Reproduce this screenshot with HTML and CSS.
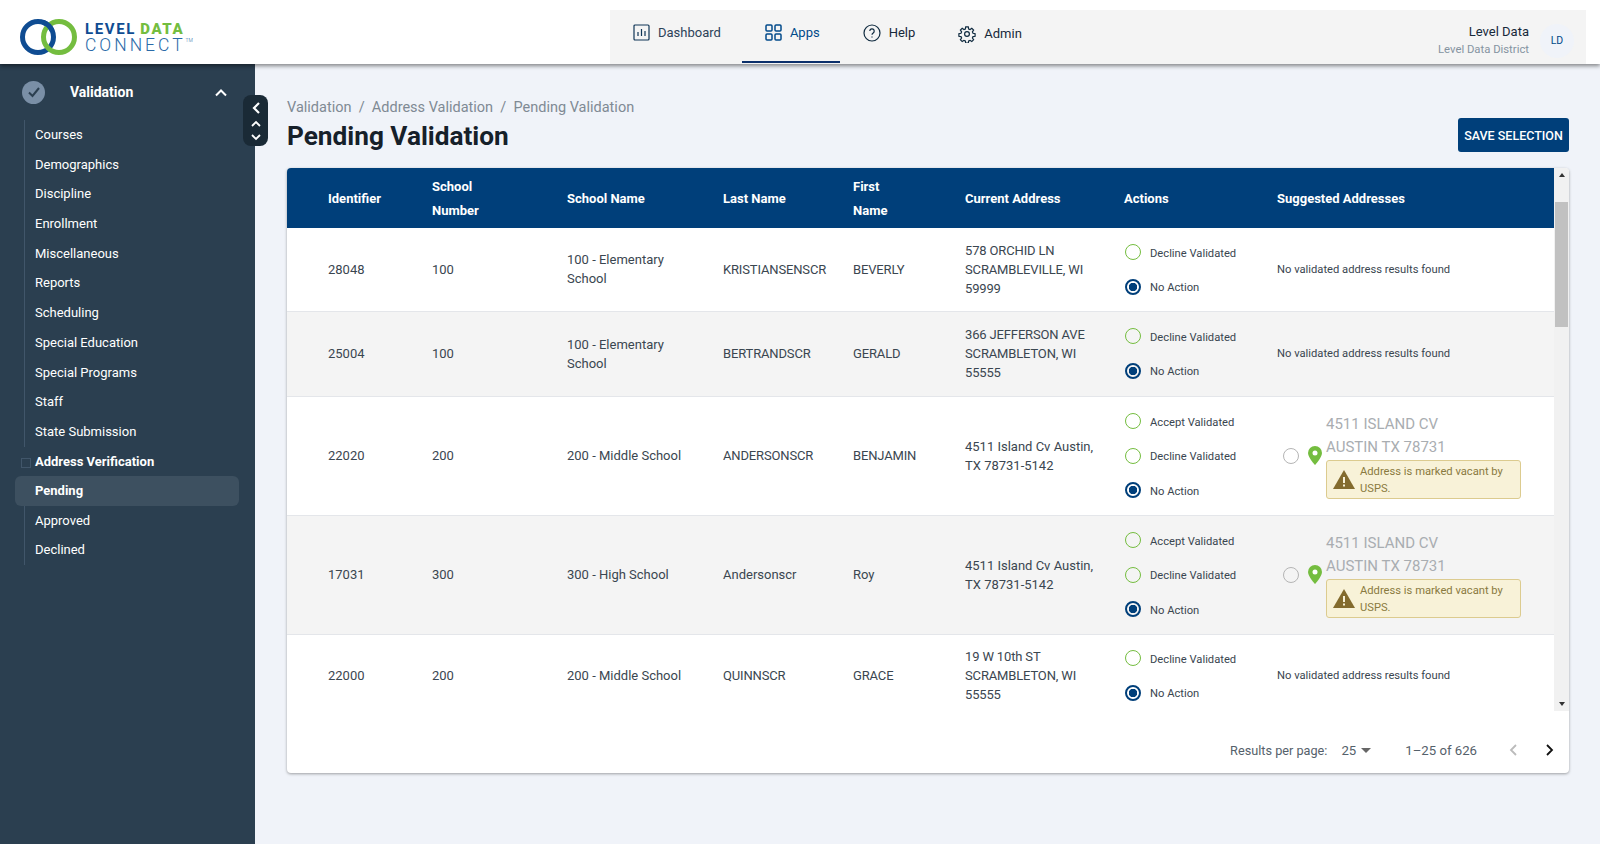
FILE: index.html
```html
<!DOCTYPE html>
<html lang="en">
  <head>
    <meta charset="UTF-8" />
    <meta name="viewport" content="width=device-width, initial-scale=1.0" />
    <title>Pending Validation</title>
    <link rel="stylesheet" href="styles.css">
  </head>
  <body>
    <header class="topbar">
      <a class="logo" href="#">
        <svg class="logo-rings" width="57" height="36" viewBox="0 0 57 36" fill="none" stroke-width="5">
          <circle cx="18" cy="18" r="15.5" stroke="#0f4c92"/>
          <circle cx="39" cy="18" r="15.5" stroke="#74bd3f"/>
          <path d="M23.3 3.44A15.5 15.5 0 0 1 32.05 11.45" stroke="#0f4c92"/>
        </svg>
        <span class="logo-text">
          <span class="logo-top">LEVEL <b>DATA</b></span>
          <span class="logo-bottom">CONNECT<sup>TM</sup></span>
        </span>
      </a>
      <div class="topnav">
        <nav class="topnav-links">
          <a href="#" class="topnav-item">
            <svg width="17" height="17" viewBox="0 0 17 17" fill="none" stroke="#0f3556" stroke-width="1.2"><rect x="1" y="1" width="15" height="15" rx="1"/><path d="M5 12V8M8.5 12V5M12 12V7"/></svg>
            Dashboard
          </a>
          <a href="#" class="topnav-item active">
            <svg width="17" height="17" viewBox="0 0 17 17" fill="none" stroke="#004a8a" stroke-width="1.5"><rect x="1" y="1" width="6" height="6" rx="1"/><rect x="10" y="1" width="6" height="6" rx="1"/><rect x="1" y="10" width="6" height="6" rx="1"/><rect x="10" y="10" width="6" height="6" rx="1"/></svg>
            Apps
          </a>
          <a href="#" class="topnav-item dark help">
            <svg width="18" height="18" viewBox="0 0 18 18" fill="none" stroke="#0f2a3f" stroke-width="1.2"><circle cx="9" cy="9" r="8"/><path d="M6.8 7a2.2 2.2 0 1 1 3.4 1.9C9.4 9.4 9 9.9 9 10.8"/><path d="M9 12.6v1"/></svg>
            Help
          </a>
          <a href="#" class="topnav-item dark admin">
            <svg width="18" height="18" viewBox="0 0 24 24" fill="none" stroke="#0f2a3f" stroke-width="1.6"><circle cx="12" cy="12" r="3.2"/><path d="M10.3 2.500h3.400l.5 2.800 1.900.8 2.300-1.600 2.400 2.400-1.600 2.300.8 1.900 2.800.5v3.400l-2.800.5-.8 1.900 1.600 2.300-2.400 2.400-2.300-1.600-1.900.8-.5 2.800h-3.400l-.5-2.800-1.900-.8-2.300 1.600-2.400-2.400 1.600-2.300-.8-1.900-2.800-.5v-3.400l2.800-.5.8-1.900-1.600-2.300 2.400-2.400 2.300 1.600 1.900-.8z"/></svg>
            Admin
          </a>
        </nav>
        <div class="account">
          <div class="account-text">
            <div class="account-name">Level Data</div>
            <div class="account-district">Level Data District</div>
          </div>
          <div class="avatar">LD</div>
        </div>
      </div>
    </header>

    <div class="layout">
      <aside class="sidebar">
        <div class="side-head">
          <span class="side-check">
            <svg width="14" height="12" viewBox="0 0 14 12" fill="none" stroke="#2b3f50" stroke-width="2"><path d="M2 6.500l3.500 3.500L12 2"/></svg>
          </span>
          <span class="side-title">Validation</span>
          <svg class="side-chevron" width="14" height="9" viewBox="0 0 14 9" fill="none" stroke="#fff" stroke-width="2"><path d="M2 7.500l5-5 5 5"/></svg>
        </div>
        <div class="side-handle">
          <svg width="10" height="14" viewBox="0 0 10 14" fill="none" stroke="#fff" stroke-width="2.2"><path d="M8 2L3 7l5 5"/></svg>
          <svg class="handle-updown" width="12" height="21" viewBox="0 0 12 21" fill="none" stroke="#fff" stroke-width="1.8"><path d="M2 6l4-4 4 4M2 15l4 4 4-4"/></svg>
        </div>
        <ul class="side-list">
          <li>Courses</li>
          <li>Demographics</li>
          <li>Discipline</li>
          <li>Enrollment</li>
          <li>Miscellaneous</li>
          <li>Reports</li>
          <li>Scheduling</li>
          <li>Special Education</li>
          <li>Special Programs</li>
          <li>Staff</li>
          <li>State Submission</li>
        </ul>
        <div class="side-group">Address Verification</div>
        <ul class="side-list sub">
          <li class="current">Pending</li>
          <li>Approved</li>
          <li>Declined</li>
        </ul>
      </aside>

      <main class="content">
        <div class="page-head">
          <div>
            <div class="crumbs">Validation &nbsp;/&nbsp; Address Validation &nbsp;/&nbsp; Pending Validation</div>
            <h1>Pending Validation</h1>
          </div>
          <button class="save-btn">SAVE SELECTION</button>
        </div>

        <section class="card">
          <div class="table-area">
            <div class="table-clip">
              <table class="grid">
                <colgroup>
                  <col class="c-id"><col class="c-num"><col class="c-school"><col class="c-last"><col class="c-first"><col class="c-addr"><col class="c-act"><col>
                </colgroup>
                <thead>
                  <tr>
                    <th class="first">Identifier</th>
                    <th>School<br>Number</th>
                    <th>School Name</th>
                    <th>Last Name</th>
                    <th>First<br>Name</th>
                    <th>Current Address</th>
                    <th>Actions</th>
                    <th>Suggested Addresses</th>
                  </tr>
                </thead>
                <tbody>
                  <tr class="r2">
                    <td class="first">28048</td><td>100</td><td class="school">100 - Elementary School</td><td class="caps">KRISTIANSENSCR</td><td class="caps">BEVERLY</td>
                    <td class="caps">578 ORCHID LN SCRAMBLEVILLE, WI 59999</td>
                    <td>
                      <label class="act"><input type="radio" name="a1">Decline Validated</label>
                      <label class="act"><input type="radio" name="a1" checked>No Action</label>
                    </td>
                    <td class="none">No validated address results found</td>
                  </tr>
                  <tr class="r2">
                    <td class="first">25004</td><td>100</td><td class="school">100 - Elementary School</td><td class="caps">BERTRANDSCR</td><td class="caps">GERALD</td>
                    <td class="caps">366 JEFFERSON AVE SCRAMBLETON, WI 55555</td>
                    <td>
                      <label class="act"><input type="radio" name="a2">Decline Validated</label>
                      <label class="act"><input type="radio" name="a2" checked>No Action</label>
                    </td>
                    <td class="none">No validated address results found</td>
                  </tr>
                  <tr>
                    <td class="first">22020</td><td>200</td><td class="school">200 - Middle School</td><td class="caps">ANDERSONSCR</td><td class="caps">BENJAMIN</td>
                    <td>4511 Island Cv Austin, TX 78731-5142</td>
                    <td>
                      <label class="act"><input type="radio" name="a3">Accept Validated</label>
                      <label class="act"><input type="radio" name="a3">Decline Validated</label>
                      <label class="act"><input type="radio" name="a3" checked>No Action</label>
                    </td>
                    <td>
                      <div class="suggest">
                        <input type="radio" class="pick" name="s3">
                        <svg class="pin" width="14" height="19" viewBox="0 0 14 19"><path d="M7 0a7 7 0 0 0-7 7c0 4.500 7 12 7 12s7-7.500 7-12a7 7 0 0 0-7-7z" fill="#74bd3f"/><circle cx="7" cy="7" r="2.500" fill="#fff"/></svg>
                        <div class="suggest-body">
                          <div class="suggest-addr">4511 ISLAND CV<br>AUSTIN TX 78731</div>
                          <div class="vacant">
                            <svg width="22" height="19" viewBox="0 0 22 19"><path d="M11 0l11 19H0z" fill="#836b2e"/><path d="M10 7h2v6h-2zM10 14.500h2v2h-2z" fill="#f8f2d8"/></svg>
                            <span>Address is marked vacant by USPS.</span>
                          </div>
                        </div>
                      </div>
                    </td>
                  </tr>
                  <tr>
                    <td class="first">17031</td><td>300</td><td class="school">300 - High School</td><td>Andersonscr</td><td>Roy</td>
                    <td>4511 Island Cv Austin, TX 78731-5142</td>
                    <td>
                      <label class="act"><input type="radio" name="a4">Accept Validated</label>
                      <label class="act"><input type="radio" name="a4">Decline Validated</label>
                      <label class="act"><input type="radio" name="a4" checked>No Action</label>
                    </td>
                    <td>
                      <div class="suggest">
                        <input type="radio" class="pick" name="s4">
                        <svg class="pin" width="14" height="19" viewBox="0 0 14 19"><path d="M7 0a7 7 0 0 0-7 7c0 4.500 7 12 7 12s7-7.500 7-12a7 7 0 0 0-7-7z" fill="#74bd3f"/><circle cx="7" cy="7" r="2.500" fill="#fff"/></svg>
                        <div class="suggest-body">
                          <div class="suggest-addr">4511 ISLAND CV<br>AUSTIN TX 78731</div>
                          <div class="vacant">
                            <svg width="22" height="19" viewBox="0 0 22 19"><path d="M11 0l11 19H0z" fill="#836b2e"/><path d="M10 7h2v6h-2zM10 14.500h2v2h-2z" fill="#f8f2d8"/></svg>
                            <span>Address is marked vacant by USPS.</span>
                          </div>
                        </div>
                      </div>
                    </td>
                  </tr>
                  <tr class="r2">
                    <td class="first">22000</td><td>200</td><td class="school">200 - Middle School</td><td class="caps">QUINNSCR</td><td class="caps">GRACE</td>
                    <td class="caps">19 W 10th ST SCRAMBLETON, WI 55555</td>
                    <td>
                      <label class="act"><input type="radio" name="a5">Decline Validated</label>
                      <label class="act"><input type="radio" name="a5" checked>No Action</label>
                    </td>
                    <td class="none">No validated address results found</td>
                  </tr>
                </tbody>
              </table>
            </div>
            <div class="scroller">
              <span class="arrow up"></span>
              <div class="track"><div class="thumb"></div></div>
              <span class="arrow down"></span>
            </div>
          </div>
          <div class="pager">
            <span class="per-label">Results per page:</span>
            <span class="per-page">25<i class="caret"></i></span>
            <span class="range">1–25 of 626</span>
            <svg class="page-prev" width="10" height="14" viewBox="0 0 10 14" fill="none" stroke="#bbb" stroke-width="1.800"><path d="M8 2L3 7l5 5"/></svg>
            <svg class="page-next" width="10" height="14" viewBox="0 0 10 14" fill="none" stroke="#111" stroke-width="1.800"><path d="M2 2l5 5-5 5"/></svg>
          </div>
        </section>
      </main>
    </div>
  </body>
</html>
```

FILE: styles.css
```css
* {
  box-sizing: border-box;
}
body {
  font-family: Roboto, "Liberation Sans", sans-serif;
  margin: 0;
  height: 844px;
  overflow: hidden;
  background-color: #f0f3f9;
  color: #2f3a44;
}
a {
  color: inherit;
  text-decoration: none;
}

/* top bar */
.topbar {
  position: relative;
  z-index: 2;
  height: 64px;
  background-color: #fff;
  display: flex;
  box-shadow: 0 2px 4px rgba(0, 0, 0, 0.45);
}
.logo {
  width: 610px;
  padding: 19px 0 0 20px;
  display: flex;
  align-items: flex-start;
  gap: 8px;
}
.logo-text {
  display: flex;
  flex-direction: column;
  margin-top: 3px;
}
.logo-top {
  font-size: 15px;
  font-weight: 700;
  letter-spacing: 1.6px;
  word-spacing: -1px;
  line-height: 15px;
  color: #0f4c92;
}
.logo-top b {
  color: #74bd3f;
}
.logo-bottom {
  font-size: 17.5px;
  font-weight: 300;
  letter-spacing: 3px;
  line-height: 17px;
  color: #2a6aa8;
}
.logo-bottom sup {
  font-size: 5px;
  letter-spacing: 0;
  vertical-align: 9px;
  line-height: 0;
}
.topnav {
  flex: 1;
  margin: 10px 14px 0 0;
  background-color: #f4f4f4;
  display: flex;
  justify-content: space-between;
}
.topnav-links {
  display: flex;
}
.topnav-item {
  display: flex;
  align-items: center;
  gap: 8px;
  padding: 0 21px 6px 23px;
  font-size: 13px;
  color: #2c4258;
  border-bottom: 2px solid transparent;
  margin-bottom: 1px;
}
.topnav-item.active {
  color: #004a8a;
  padding-right: 20px;
  border-bottom-color: #0b2f6b;
}
.topnav-item.dark {
  color: #17293a;
}
.topnav-item.help {
  padding-right: 20px;
}
.topnav-item.admin {
  padding-bottom: 4px;
}
.account {
  display: flex;
  align-items: center;
  padding: 7px 12px 0 0;
  gap: 11px;
}
.account-text {
  text-align: right;
}
.account-name {
  font-size: 13px;
  color: #17293a;
  line-height: 18px;
}
.account-district {
  font-size: 11.3px;
  color: #8593a1;
  line-height: 18px;
}
.avatar {
  width: 34px;
  height: 34px;
  border-radius: 50%;
  background-color: #f0f3f9;
  color: #004a8a;
  font-size: 10.5px;
  display: flex;
  align-items: center;
  justify-content: center;
}

.layout {
  display: flex;
  height: 780px;
}

/* side menu */
.sidebar {
  position: relative;
  width: 255px;
  flex: none;
  background-color: #2b3f50;
  color: #fff;
  font-size: 13px;
  padding-left: 15px;
}
.side-head {
  height: 56px;
  display: flex;
  align-items: center;
  padding-left: 7px;
}
.side-check {
  width: 23px;
  height: 23px;
  border-radius: 50%;
  background-color: #7a8fa6;
  display: flex;
  align-items: center;
  justify-content: center;
}
.side-title {
  font-weight: 700;
  margin-left: 25px;
  font-size: 14px;
}
.side-chevron {
  margin-left: 81px;
}
.side-handle {
  position: absolute;
  top: 31px;
  left: 243px;
  width: 25px;
  height: 51px;
  background-color: #1a2a36;
  border-radius: 8px;
  display: flex;
  flex-direction: column;
  align-items: center;
  padding-top: 6px;
  gap: 5px;
}
.side-list {
  list-style: none;
  margin: 0 0 0 9px;
  padding: 0;
  border-left: 1px solid #41566a;
}
.side-list li {
  height: 29.7px;
  line-height: 29.7px;
  padding-left: 20px;
  margin-left: -10px;
}
.side-group {
  height: 29.5px;
  line-height: 30px;
  padding-left: 20px;
  font-weight: 700;
  position: relative;
}
.side-group::before {
  content: "";
  position: absolute;
  left: 6px;
  top: 11px;
  width: 8px;
  height: 8px;
  border: 1px solid #41566a;
}
.side-list.sub li {
  width: 224px;
}
.side-list .current {
  background-color: #3d5060;
  border-radius: 6px;
  font-weight: 700;
}

/* main */
.content {
  flex: 1;
  padding: 33px 31px 0 32px;
}
.page-head {
  display: flex;
  justify-content: space-between;
  align-items: flex-end;
}
.crumbs {
  font-size: 14.5px;
  line-height: 21px;
  color: #7f8a94;
}
h1 {
  font-size: 26.2px;
  line-height: 36px;
  font-weight: 700;
  margin: 0;
  color: #16202a;
}
.save-btn {
  width: 111px;
  height: 34px;
  margin-bottom: 2px;
  background-color: #003f7a;
  color: #fff;
  border: 0;
  border-radius: 3px;
  font-family: inherit;
  font-size: 12.5px;
  font-weight: 500;
  padding: 0;
}
.card {
  margin-top: 14px;
  height: 605px;
  background-color: #fff;
  border-radius: 4px;
  box-shadow: 0 1px 3px rgba(0, 0, 0, 0.35);
  overflow: hidden;
}
.table-area {
  display: flex;
  height: 543px;
}
.table-clip {
  flex: 1;
  overflow: hidden;
}
.grid {
  width: 100%;
  table-layout: fixed;
  border-collapse: collapse;
  font-size: 13px;
  line-height: 19px;
}
.c-id { width: 145px; }
.c-num { width: 135px; }
.c-school { width: 156px; }
.c-last { width: 130px; }
.c-first { width: 112px; }
.c-addr { width: 159px; }
.c-act { width: 153px; }
.grid th {
  height: 60px;
  background-color: #003f7a;
  color: #fff;
  font-size: 13px;
  font-weight: 700;
  line-height: 24px;
  text-align: left;
  padding: 2px 0 0;
}
.grid td {
  padding: 0 16px 0 0;
  border-bottom: 1px solid #e4e6ea;
  color: #3a4650;
}
.grid td.school {
  padding-right: 28px;
}
.grid td.caps {
  letter-spacing: -0.15px;
}
.grid .first {
  padding-left: 41px;
}
.grid tr {
  height: 119px;
}
.grid .r2 {
  height: 83px;
}
.grid tbody tr:nth-child(2) {
  height: 85px;
}
.grid thead tr {
  height: 60px;
}
.grid tbody tr:nth-child(even) {
  background-color: #f4f4f4;
}
.act {
  display: flex;
  align-items: center;
  height: 34.5px;
  padding-top: 2px;
  font-size: 11.2px;
  color: #3a4650;
  gap: 9px;
}
input[type="radio"] {
  appearance: none;
  margin: 0 0 0 1px;
  width: 16px;
  height: 16px;
  border-radius: 50%;
  border: 1.5px solid #74bd3f;
  flex: none;
}
.act input[type="radio"] {
  margin-top: -2px;
}
input[type="radio"]:checked {
  border: 2px solid #003f7a;
  background: radial-gradient(circle, #003f7a 0 4px, transparent 4.5px);
}
input.pick {
  border-color: #b5b5b5;
}
.grid td.none {
  font-size: 11.2px;
}
.suggest {
  display: flex;
  align-items: center;
  padding-left: 5px;
}
.pin {
  margin: 0 4px 0 9px;
}
.suggest-addr {
  font-size: 15px;
  line-height: 23px;
  margin-bottom: 1px;
  color: #a9adb1;
}
.vacant {
  width: 195px;
  height: 39px;
  background-color: #f8f2d8;
  border: 1px solid #dccb8f;
  border-radius: 3px;
  display: flex;
  align-items: center;
  gap: 5px;
  padding: 2px 12px 0 6px;
  font-size: 11.2px;
  line-height: 17.5px;
  color: #8a7a40;
}
.vacant svg {
  flex: none;
  margin-top: -2px;
}
.scroller {
  width: 15px;
  flex: none;
  background-color: #f1f1f1;
  display: flex;
  flex-direction: column;
  align-items: center;
}
.arrow {
  flex: none;
  width: 0;
  height: 0;
  border-left: 3.5px solid transparent;
  border-right: 3.5px solid transparent;
}
.arrow.up {
  border-bottom: 4px solid #333;
  margin-top: 5px;
}
.arrow.down {
  border-top: 4px solid #333;
  margin-bottom: 5px;
}
.track {
  flex: 1;
  width: 100%;
  padding: 25px 1px 0;
}
.thumb {
  height: 125px;
  background-color: #c1c1c1;
}
.pager {
  height: 62px;
  display: flex;
  align-items: center;
  justify-content: flex-end;
  font-size: 13.2px;
  color: #55616b;
  padding-right: 14px;
  padding-top: 16px;
}
.per-label {
  font-size: 12.7px;
}
.per-page {
  margin-left: 14px;
  display: flex;
  align-items: center;
  gap: 5px;
}
.caret {
  width: 0;
  height: 0;
  border-left: 5px solid transparent;
  border-right: 5px solid transparent;
  border-top: 5px solid #666;
}
.range {
  margin-left: 34px;
}
.page-prev {
  margin-left: 31px;
}
.page-next {
  margin-left: 27px;
}
```
